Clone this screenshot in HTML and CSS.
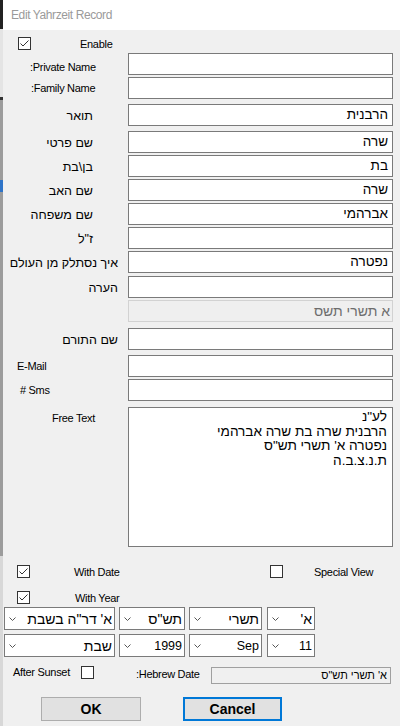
FILE: index.html
```html
<!DOCTYPE html>
<html>
<head>
<meta charset="utf-8">
<title>Edit Yahrzeit Record</title>
<link rel="stylesheet" href="styles.css">
</head>
<body>
<div class="screen">
  <div class="bgstrip"></div>
  <div class="dialog">
    <div class="titlebar">Edit Yahrzeit Record</div>
    <div class="body">
      <div class="row row-enable">
        <svg class="cb cb-enable" viewBox="0 0 13 13"><rect x="0.5" y="0.5" width="12" height="12" fill="#fff" stroke="#333"/><polyline points="2.5,6.5 5,9 10.5,3.5" fill="none" stroke="#333"/></svg>
        <span class="en enable-label">Enable</span>
      </div>

      <div class="row field g3">
        <span class="lab en en-lab pl27 lower">:Private Name</span>
        <div class="tb"></div>
      </div>
      <div class="row field g2">
        <span class="lab en en-lab pl28">:Family Name</span>
        <div class="tb"></div>
      </div>
      <div class="row field g5">
        <span class="lab he pr35">תואר</span>
        <div class="tb">הרבנית</div>
      </div>
      <div class="row field g5">
        <span class="lab he pr35">שם פרטי</span>
        <div class="tb">שרה</div>
      </div>
      <div class="row field g2">
        <span class="lab he pr35">בן\בת</span>
        <div class="tb">בת</div>
      </div>
      <div class="row field g2">
        <span class="lab he pr35">שם האב</span>
        <div class="tb">שרה</div>
      </div>
      <div class="row field g2">
        <span class="lab he pr35">שם משפחה</span>
        <div class="tb">אברהמי</div>
      </div>
      <div class="row field g2">
        <span class="lab he pr35">ז"ל</span>
        <div class="tb"></div>
      </div>
      <div class="row field g2">
        <span class="lab he pr10">איך נסתלק מן העולם</span>
        <div class="tb">נפטרה</div>
      </div>
      <div class="row field g3">
        <span class="lab he pr10">הערה</span>
        <div class="tb"></div>
      </div>
      <div class="row field g2">
        <span class="lab"></span>
        <div class="tb tb-disabled">א תשרי תשס</div>
      </div>
      <div class="row field g6">
        <span class="lab he pr10">שם התורם</span>
        <div class="tb"></div>
      </div>
      <div class="row field g5">
        <span class="lab en en-lab pl14">E-Mail</span>
        <div class="tb"></div>
      </div>
      <div class="row field g2">
        <span class="lab en en-lab pl17"># Sms</span>
        <div class="tb"></div>
      </div>
      <div class="row memo-row g6">
        <span class="lab en en-lab pl49 memo-lab">Free Text</span>
        <div class="memo">
          <div>לע"נ</div>
          <div>הרבנית שרה בת שרה אברהמי</div>
          <div>נפטרה א' תשרי תש"ס</div>
          <div>ת.נ.צ.ב.ה</div>
        </div>
      </div>

      <div class="row opt-row g18">
        <svg class="cb cb-left" viewBox="0 0 13 13"><rect x="0.5" y="0.5" width="12" height="12" fill="#fff" stroke="#333"/><polyline points="2.5,6.5 5,9 10.5,3.5" fill="none" stroke="#333"/></svg>
        <span class="en opt-label">With Date</span>
        <svg class="cb" viewBox="0 0 13 13"><rect x="0.5" y="0.5" width="12" height="12" fill="#fff" stroke="#333"/></svg>
        <span class="en special-label">Special View</span>
      </div>
      <div class="row opt-row g13">
        <svg class="cb cb-left" viewBox="0 0 13 13"><rect x="0.5" y="0.5" width="12" height="12" fill="#fff" stroke="#333"/><polyline points="2.5,6.5 5,9 10.5,3.5" fill="none" stroke="#333"/></svg>
        <span class="en opt-label year-label">With Year</span>
      </div>

      <div class="row combo-row g3">
        <div class="combo w111"><svg class="chev" viewBox="0 0 7 4"><polyline points="0.5,0.5 3.5,3.5 6.5,0.5" fill="none" stroke="#555"/></svg><span class="combo-text">א' דר"ה בשבת</span></div>
        <div class="combo w66"><svg class="chev" viewBox="0 0 7 4"><polyline points="0.5,0.5 3.5,3.5 6.5,0.5" fill="none" stroke="#555"/></svg><span class="combo-text">תש"ס</span></div>
        <div class="combo w73"><svg class="chev" viewBox="0 0 7 4"><polyline points="0.5,0.5 3.5,3.5 6.5,0.5" fill="none" stroke="#555"/></svg><span class="combo-text">תשרי</span></div>
        <div class="combo w48"><svg class="chev" viewBox="0 0 7 4"><polyline points="0.5,0.5 3.5,3.5 6.5,0.5" fill="none" stroke="#555"/></svg><span class="combo-text">א'</span></div>
      </div>
      <div class="row combo-row g4">
        <div class="combo w111"><svg class="chev" viewBox="0 0 7 4"><polyline points="0.5,0.5 3.5,3.5 6.5,0.5" fill="none" stroke="#555"/></svg><span class="combo-text">שבת</span></div>
        <div class="combo w66"><svg class="chev" viewBox="0 0 7 4"><polyline points="0.5,0.5 3.5,3.5 6.5,0.5" fill="none" stroke="#555"/></svg><span class="combo-text num">1999</span></div>
        <div class="combo w73"><svg class="chev" viewBox="0 0 7 4"><polyline points="0.5,0.5 3.5,3.5 6.5,0.5" fill="none" stroke="#555"/></svg><span class="combo-text num">Sep</span></div>
        <div class="combo w48"><svg class="chev" viewBox="0 0 7 4"><polyline points="0.5,0.5 3.5,3.5 6.5,0.5" fill="none" stroke="#555"/></svg><span class="combo-text num">11</span></div>
      </div>

      <div class="row sunset-row g9">
        <span class="en sunset-label">After Sunset</span>
        <svg class="cb" viewBox="0 0 13 13"><rect x="0.5" y="0.5" width="12" height="12" fill="#fff" stroke="#333"/></svg>
        <span class="en hdate-label">:Hebrew Date</span>
        <div class="hdate">א' תשרי תש"ס</div>
      </div>

      <div class="row btn-row g13">
        <div class="btn btn-ok">OK</div>
        <div class="btn btn-cancel">Cancel</div>
      </div>
    </div>
  </div>
</div>
</body>
</html>
```

FILE: styles.css
```css
* { box-sizing: border-box; margin: 0; padding: 0; }
html, body { width: 400px; height: 726px; overflow: hidden; }
body {
  font-family: "Liberation Sans", Arial, "DejaVu Sans", sans-serif;
  background: #f0f0f0;
  color: #000;
}
.screen { display: flex; width: 400px; height: 726px; }
.bgstrip {
  width: 3px;
  flex: none;
  background: linear-gradient(to bottom,
    #222 0 29px,
    #e4e4e4 29px 97px,
    #333 97px 100px,
    #9c9c9c 100px 180px,
    #2f74c8 180px 192px,
    #9c9c9c 192px 556px,
    #d8d8d8 556px 726px);
}
.dialog { flex: 1; display: flex; flex-direction: column; background: #f0f0f0; }
.titlebar {
  height: 30px;
  flex: none;
  background: #fff;
  color: #9a9a9a;
  font-size: 12px;
  letter-spacing: -0.4px;
  padding-left: 8px;
  display: flex;
  align-items: center;
}
.body { flex: 1; display: flex; flex-direction: column; }
.row { display: flex; align-items: center; flex: none; }

.g2 { margin-top: 2px; }
.g3 { margin-top: 3px; }
.g4 { margin-top: 4px; }
.g5 { margin-top: 5px; }
.g6 { margin-top: 6px; }
.g9 { margin-top: 9px; }
.g13 { margin-top: 13px; }
.g18 { margin-top: 18px; }

.cb { width: 13px; height: 13px; flex: none; display: block; }
.en { font-size: 11px; letter-spacing: -0.3px; white-space: nowrap; }

.row-enable { height: 13px; margin-top: 7px; }
.cb-enable { margin-left: 15px; }
.enable-label { margin-left: 49px; }

.field { height: 22px; }
.lab { width: 125px; flex: none; white-space: nowrap; }
.he { text-align: right; font-size: 12.5px; direction: rtl; padding-top: 2px; }
.en-lab { text-align: left; }
.lower { padding-top: 5px; }
.pl14 { padding-left: 14px; }
.pl17 { padding-left: 17px; }
.pl27 { padding-left: 27px; }
.pl28 { padding-left: 28px; }
.pl49 { padding-left: 49px; }
.pr10 { padding-right: 10px; }
.pr35 { padding-right: 35px; }

.tb {
  width: 265px;
  height: 22px;
  flex: none;
  background: #fff;
  border: 1px solid #7a7a7a;
  direction: rtl;
  text-align: right;
  padding: 0 4px;
  font-size: 13.5px;
  line-height: 20px;
  white-space: nowrap;
}
.tb-disabled {
  background: #efefef;
  border-color: #d2d2d2;
  color: #6d6d6d;
  font-size: 14px;
  padding-right: 2px;
}

.memo-row { align-items: flex-start; height: 140px; }
.memo-lab { padding-top: 5px; }
.memo {
  width: 265px;
  height: 140px;
  flex: none;
  background: #fff;
  border: 1px solid #7a7a7a;
  direction: rtl;
  text-align: right;
  padding: 2px 5px 0;
  font-size: 13.6px;
  line-height: 14.7px;
}

.opt-row { height: 13px; }
.cb-left { margin-left: 14px; }
.opt-label { width: 196px; margin-left: 44px; flex: none; }
.year-label { margin-left: 45px; }
.special-label { margin-left: 31px; }

.combo-row { height: 23px; }
.combo {
  height: 23px;
  flex: none;
  display: flex;
  align-items: center;
  background: #fff;
  border: 1px solid #7a7a7a;
  padding-left: 4px;
  padding-right: 2px;
}
.combo + .combo { margin-left: 4px; }
.combo.w111 { margin-left: 1px; width: 111px; }
.w66 { width: 66px; }
.w73 { width: 73px; }
.w48 { width: 48px; margin-left: 5px !important; }
.chev { width: 7px; height: 4px; flex: none; display: block; }
.combo-text {
  flex: 1;
  direction: rtl;
  text-align: right;
  font-size: 14px;
  white-space: nowrap;
}
.combo-text.num { font-size: 12.5px; }

.sunset-row { height: 18px; align-items: flex-start; }
.sunset-label { width: 68px; margin-left: 10px; flex: none; line-height: 13px; }
.hdate-label { width: 75px; margin-left: 42px; flex: none; margin-top: 2px; line-height: 13px; }
.hdate {
  width: 180px;
  height: 17px;
  flex: none;
  margin-top: 1px;
  background: #f0f0f0;
  border: 1px solid #a0a0a0;
  direction: rtl;
  text-align: right;
  font-size: 11px;
  line-height: 15px;
  padding-right: 3px;
  white-space: nowrap;
}

.btn-row { height: 24px; }
.btn {
  height: 24px;
  flex: none;
  display: flex;
  align-items: center;
  justify-content: center;
  background: #e1e1e1;
  border: 1px solid #adadad;
  font-size: 14px;
  font-weight: bold;
}
.btn-ok { width: 100px; margin-left: 38px; }
.btn-cancel { width: 99px; margin-left: 42px; border: 2px solid #0078d7; }
```
